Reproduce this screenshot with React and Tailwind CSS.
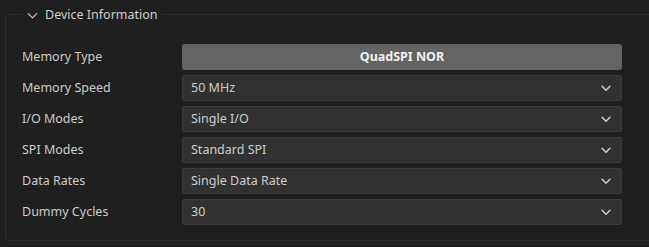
import React from "react";

const rows = [
  ["Memory Speed", "50 MHz"],
  ["I/O Modes", "Single I/O"],
  ["SPI Modes", "Standard SPI"],
  ["Data Rates", "Single Data Rate"],
  ["Dummy Cycles", "30"],
];

function Chevron({ className, w = 1.6 }) {
  return (
    <svg className={className} viewBox="0 0 16 16" fill="none" stroke="currentColor" strokeWidth={w} strokeLinecap="round" strokeLinejoin="round">
      <path d="M3.5 6 L8 10.5 L12.5 6" />
    </svg>
  );
}

export default function App() {
  return (
    <div className="w-[649px] h-[247px] overflow-hidden bg-[#1f1f1f] text-[#cccccc] text-[12.5px]" style={{ fontFamily: '"Noto Sans", "Open Sans", sans-serif' }}>
      <fieldset className="ml-[5px] w-[680px] mt-[5px] border border-[#2e2e2e] rounded-[4px] pl-[16px] pt-[21px] pb-[15px] min-w-0">
        <legend className="ml-0 pl-[3px] pr-[4px] flex items-center gap-[5px] leading-[18px] text-[#cccccc] translate-y-[1px]">
          <Chevron className="w-[15px] h-[15px] text-[#c5c5c5]" w={1.3} />
          <span className="text-[12.5px]">Device Information</span>
        </legend>
        <div className="flex flex-col gap-[5px]">
          <div className="flex items-center h-[26px]">
            <div className="w-[160px]">Memory Type</div>
            <div className="w-[440px] h-[26px] rounded-[3px] bg-[#646464] flex items-center justify-center font-bold text-[#f0f0f0]">
              QuadSPI NOR
            </div>
          </div>
          {rows.map(([label, value]) => (
            <div key={label} className="flex items-center h-[26px]">
              <div className="w-[160px]">{label}</div>
              <div className="w-[440px] h-[26px] rounded-[2px] bg-[#313131] border border-[#3c3c3c] flex items-center justify-between pl-[8px] pr-[8px]">
                <span>{value}</span>
                <Chevron className="w-[14px] h-[14px] text-[#cccccc]" w={1.8} />
              </div>
            </div>
          ))}
        </div>
      </fieldset>
    </div>
  );
}
